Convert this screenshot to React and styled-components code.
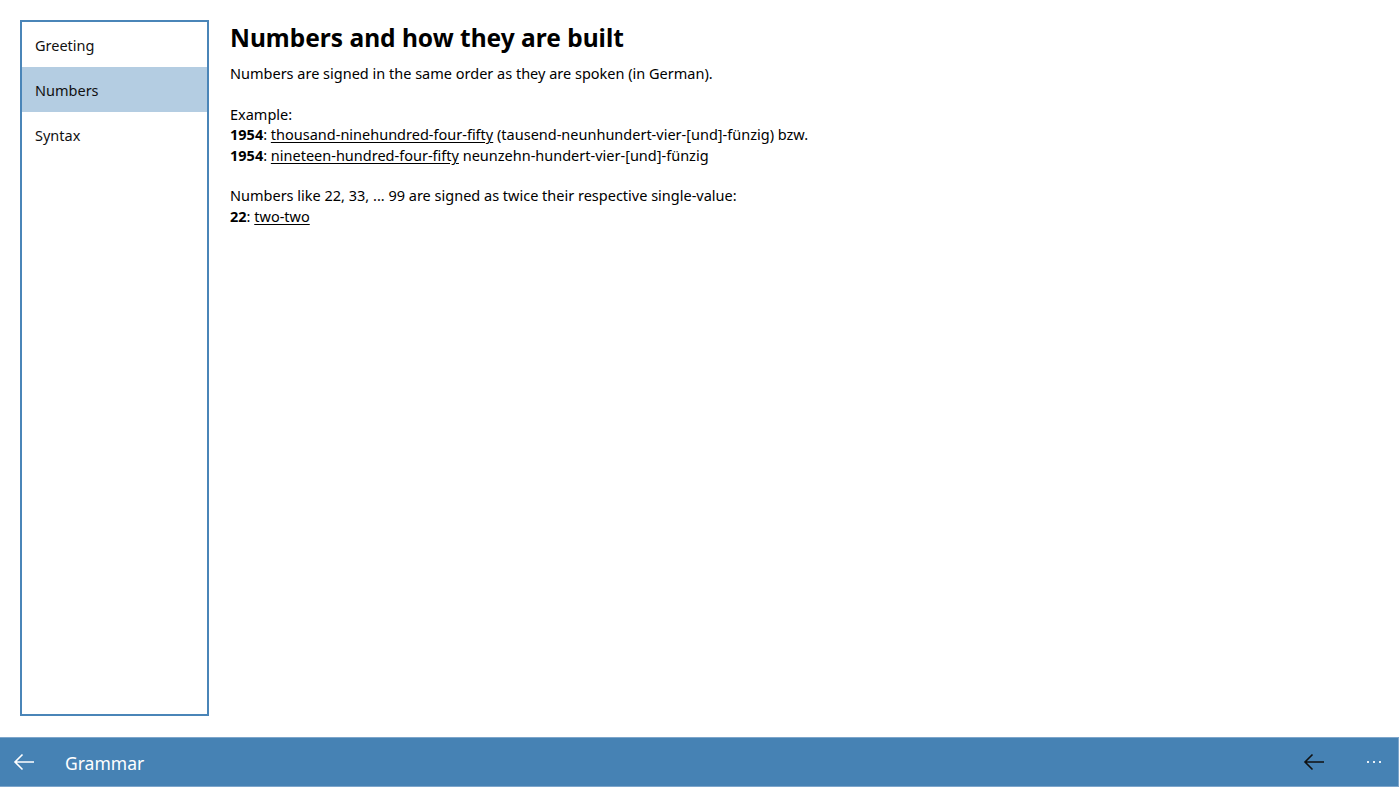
import React from "react";
import styled, { createGlobalStyle } from "styled-components";

const Global = createGlobalStyle`
  html, body { margin: 0; padding: 0; background: #fff; }
  body { font-family: "Noto Sans", "Open Sans", sans-serif; color: #000; }
  * { box-sizing: border-box; }
`;

const Page = styled.div`
  width: 1399px;
  height: 787px;
  display: flex;
  flex-direction: column;
  overflow: hidden;
`;

const Main = styled.div`
  flex: 1;
  display: flex;
  padding: 20px 20px 21px 20px;
  gap: 21px;
  min-height: 0;
`;

const NavList = styled.ul`
  list-style: none;
  margin: 0;
  padding: 0;
  width: 189px;
  border: 2px solid #4a85b8;
  display: flex;
  flex-direction: column;
`;

const NavItem = styled.li`
  height: 45px;
  display: flex;
  align-items: center;
  padding-left: 13px;
  font-size: 14.5px;
  color: #111;
  background: ${(p) => (p.$active ? "#b4cde2" : "transparent")};
`;

const Content = styled.div`
  flex: 1;
`;

const Title = styled.h1`
  margin: 0;
  font-size: 24.5px;
  font-weight: 700;
  line-height: 36px;
`;

const Body = styled.div`
  font-size: 14.5px;
  line-height: 20.4px;
  margin-top: 7px;
`;

const Line = styled.div`
  min-height: 20.4px;
`;

const Num = styled.b`
  font-weight: 700;
`;

const Sign = styled.span`
  text-decoration: underline;
  text-underline-offset: 2px;
`;

const AppBar = styled.div`
  height: 50px;
  background: #4682b4;
  border-top: 1px solid #7ea6cb;
  border-bottom: 1px solid #7ea6cb;
  border-right: 1px solid #7ea6cb;
  display: flex;
  align-items: center;
`;

const BarButton = styled.button`
  width: 48px;
  height: 48px;
  border: none;
  background: transparent;
  padding: 0;
  display: flex;
  align-items: center;
  justify-content: center;
  margin-right: ${(p) => p.$gap || 0}px;
`;

const BarTitle = styled.div`
  flex: 1;
  color: #fff;
  font-size: 17.5px;
  padding-left: 17px;
  margin-top: 1px;
`;

const Dots = styled.span`
  display: flex;
  gap: 4px;
`;

const Dot = styled.span`
  width: 2px;
  height: 2px;
  background: #e8f0f8;
`;

const Arrow = ({ color }) => (
  <svg width="22" height="18" viewBox="0 0 22 18" fill="none" stroke={color} strokeWidth="1.6">
    <path d="M21 9H2M9.5 1.5L2 9l7.5 7.5" />
  </svg>
);

export default function App() {
  return (
    <Page>
      <Global />
      <Main>
        <NavList>
          <NavItem>Greeting</NavItem>
          <NavItem $active>Numbers</NavItem>
          <NavItem>Syntax</NavItem>
        </NavList>
        <Content>
          <Title>Numbers and how they are built</Title>
          <Body>
            <Line>Numbers are signed in the same order as they are spoken (in German).</Line>
            <Line />
            <Line>Example:</Line>
            <Line>
              <Num>1954</Num>: <Sign>thousand-ninehundred-four-fifty</Sign> (tausend-neunhundert-vier-[und]-fünzig) bzw.
            </Line>
            <Line>
              <Num>1954</Num>: <Sign>nineteen-hundred-four-fifty</Sign> neunzehn-hundert-vier-[und]-fünzig
            </Line>
            <Line />
            <Line>Numbers like 22, 33, ... 99 are signed as twice their respective single-value:</Line>
            <Line>
              <Num>22</Num>: <Sign>two-two</Sign>
            </Line>
          </Body>
        </Content>
      </Main>
      <AppBar>
        <BarButton>
          <Arrow color="#fff" />
        </BarButton>
        <BarTitle>Grammar</BarTitle>
        <BarButton $gap={12}>
          <Arrow color="#111" />
        </BarButton>
        <BarButton>
          <Dots>
            <Dot />
            <Dot />
            <Dot />
          </Dots>
        </BarButton>
      </AppBar>
    </Page>
  );
}
